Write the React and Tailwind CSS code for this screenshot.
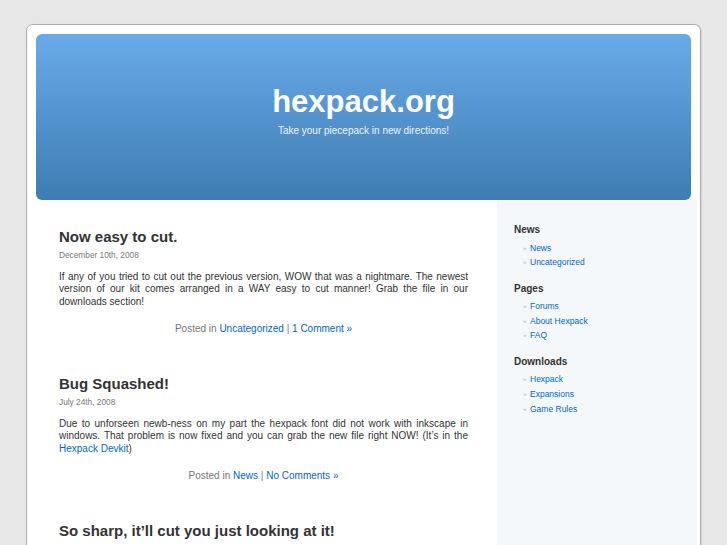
import React from "react";

const posts = [
  {
    title: "Now easy to cut.",
    date: "December 10th, 2008",
    body: (
      <>
        If any of you tried to cut out the previous version, WOW that was a nightmare. The newest
        version of our kit comes arranged in a WAY easy to cut manner! Grab the file in our
        downloads section!
      </>
    ),
    category: "Uncategorized",
    comments: "1 Comment »",
  },
  {
    title: "Bug Squashed!",
    date: "July 24th, 2008",
    body: (
      <>
        Due to unforseen newb-ness on my part the hexpack font did not work with inkscape in
        windows. That problem is now fixed and you can grab the new file right NOW! (It’s in the{" "}
        <a href="#" className="text-[#0066cc]">
          Hexpack Devkit
        </a>
        )
      </>
    ),
    category: "News",
    comments: "No Comments »",
  },
  {
    title: "So sharp, it’ll cut you just looking at it!",
    date: "June 22nd, 2008",
    body: (
      <>
        The hexpack tiles have been redrawn from scratch with crisp lines, so printing and cutting
        them out is a breeze. Grab the newest version from the downloads section and let us know
        what you think on the forums!
      </>
    ),
    category: "News",
    comments: "2 Comments »",
  },
];

const sidebar = [
  { heading: "News", items: ["News", "Uncategorized"] },
  { heading: "Pages", items: ["Forums", "About Hexpack", "FAQ"] },
  { heading: "Downloads", items: ["Hexpack", "Expansions", "Game Rules"] },
];

function Post({ post }) {
  return (
    <div className="mb-[40px]">
      <h2 className="text-[15px] leading-[18px] font-bold text-[#333]">{post.title}</h2>
      <div className="mt-[3.5px] text-[8.3px] leading-[10px] text-[#777]">{post.date}</div>
      <p className="mt-[11px] text-[10px] leading-[12.5px] text-[#333] text-justify">{post.body}</p>
      <p className="mt-[14.5px] text-center text-[10px] leading-[12.5px] text-[#777]">
        Posted in{" "}
        <a href="#" className="text-[#0066cc]">
          {post.category}
        </a>{" "}
        |{" "}
        <a href="#" className="text-[#0066cc]">
          {post.comments}
        </a>
      </p>
    </div>
  );
}

export default function App() {
  return (
    <div
      className="min-h-screen bg-[#e7e7e7] pt-[24px] pl-[26px]"
      style={{ fontFamily: '"Liberation Sans", Arial, sans-serif' }}
    >
      <div className="w-[675px] rounded-t-[7px] border border-[#ababab] bg-white pt-[9px] shadow-[1px_0_1px_rgba(0,0,0,0.08)]">
        <header className="mx-[9px] h-[166px] rounded-[6px] bg-gradient-to-b from-[#69abe8] to-[#3e7cb3] pt-[52px] text-center text-white">
          <h1 className="text-[31px] leading-[31px] font-bold">hexpack.org</h1>
          <div className="mt-[8px] text-[10px] leading-[12px] text-[#eef4fb]">
            Take your piecepack in new directions!
          </div>
        </header>

        <div className="flex pr-[3px]">
          <main className="w-[470px] pl-[32px] pr-[29px] pt-[28px]">
            {posts.map((post) => (
              <Post key={post.title} post={post} />
            ))}
          </main>

          <aside className="w-[200px] bg-[#f5f8fb] pl-[17px] pt-[24px] pb-[40px]">
            {sidebar.map((section, i) => (
              <div key={section.heading} className={i > 0 ? "mt-[13px]" : ""}>
                <h3 className="text-[10px] leading-[12px] font-bold text-[#333]">
                  {section.heading}
                </h3>
                <ul className="mt-[4.5px] pl-[9px]">
                  {section.items.map((item) => (
                    <li key={item} className="flex items-center text-[8.5px] leading-[14.6px]">
                      <span className="w-[7px] text-[6px] text-[#b0b0b0]">»</span>
                      <a href="#" className="text-[#0066cc]">
                        {item}
                      </a>
                    </li>
                  ))}
                </ul>
              </div>
            ))}
          </aside>
        </div>
      </div>
    </div>
  );
}
